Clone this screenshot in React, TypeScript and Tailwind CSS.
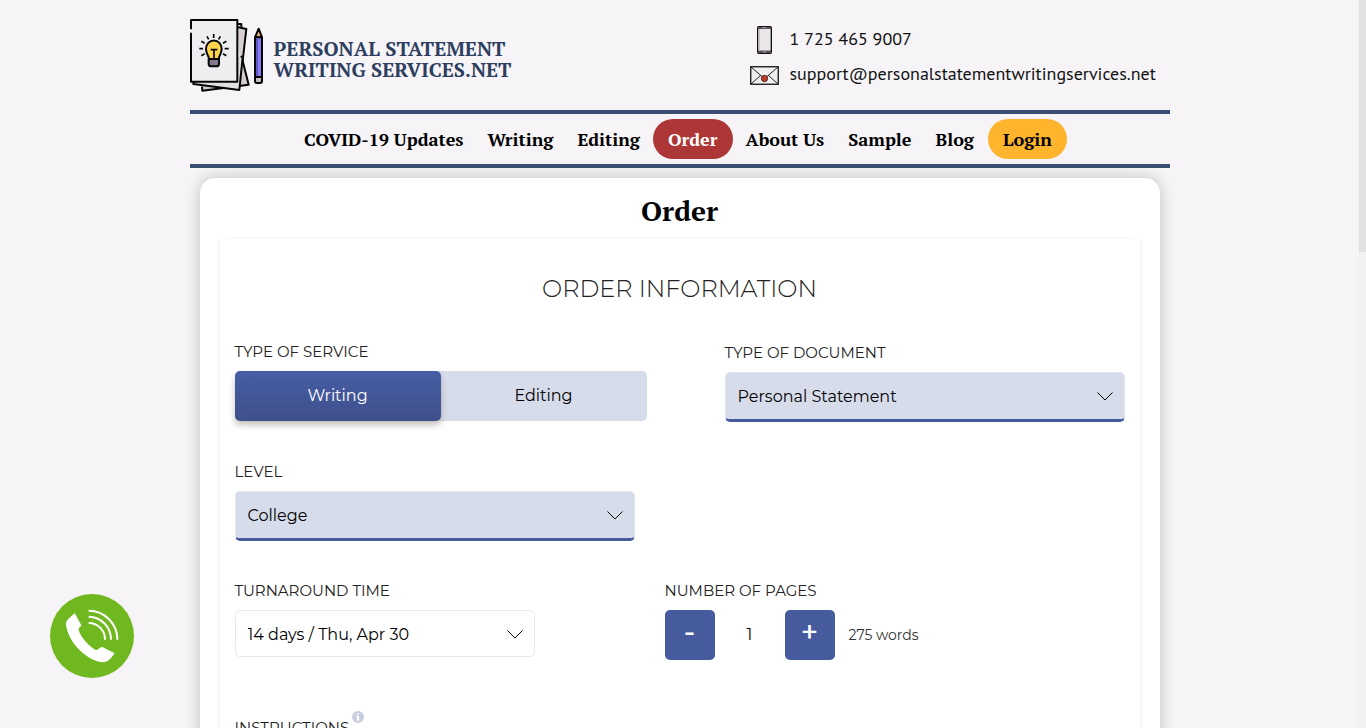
import { useState, type ReactNode } from "react";

const serif = "font-['PT_Serif','Liberation_Serif',serif]";
const body = "font-['Montserrat','Inter',sans-serif]";

function LogoMark() {
  return (
    <svg viewBox="30 24 222 225" className="h-[75px] w-[74px] shrink-0" fill="none" stroke="#050505" strokeWidth="6" strokeLinejoin="round" aria-hidden="true">
      <path d="M172 51 L199 57 L183 195" fill="#d6d0d4" />
      <path d="M173 42 h11 v11" fill="#d9d5d8" />
      <path d="M184 137 L206 224 L67 242 L66 230" fill="#d3cdd1" />
      <path d="M188 142 L178 240 L40 222 V214" fill="#e3e0e3" />
      <path d="M33 58 V30 H172 V215 H33 V68" fill="#eeedef" />
      <path d="M86 147 h31 v14 q0 8 -8 8 h-15 q-8 0 -8 -8z" fill="#85798d" strokeWidth="6" />
      <path d="M87 147 C86 137 78 131 78 116 A23 24 0 0 1 125 116 C125 131 117 137 116 147 Z" fill="#fdd54b" strokeWidth="6" />
      <path d="M92 119 h20 M102 119 v27" strokeWidth="5" />
      <path d="M101 72 v12 M81 79 l5 9 M121 79 l-5 9 M64 94 l10 6 M139 94 l-10 6 M58 116 h11 M134 116 h12 M64 137 l10 -6 M139 137 l-10 -6" strokeWidth="5" />
      <path d="M225 82 L236 56 L246 82 Z" fill="#f4b877" strokeWidth="6" />
      <path d="M225 82 H246 V201 H225 Z" fill="#8678f0" strokeWidth="6" />
      <path d="M231 85 V198" stroke="#5a4fc4" strokeWidth="5" />
      <path d="M225 201 H246 V213 q0 6 -6 6 h-9 q-6 0 -6 -6z" fill="#c5c0c7" strokeWidth="6" />
    </svg>
  );
}

function MobileIcon() {
  return (
    <svg viewBox="0 0 15 28" className="h-7 w-[15px]" aria-hidden="true">
      <rect x=".5" y=".5" width="14" height="27" rx=".8" fill="#5b4f57" stroke="#111" />
      <rect x="1.5" y="3" width="12" height="21.5" fill="#e9e7ea" />
      <path d="M1.5 3h1.5v21.5H1.5z" fill="#c9c5ca" />
      <path d="M5.5 1.5h4M6 26h3" stroke="#b9b3b9" strokeWidth=".8" />
    </svg>
  );
}

function MailIcon() {
  return (
    <svg viewBox="0 0 29 19" className="h-[19px] w-[29px]" aria-hidden="true">
      <rect x=".75" y=".75" width="27.5" height="17.5" fill="#f1f0f1" stroke="#111" strokeWidth="1.3" />
      <path d="M1 1L12 10.5M28 1L17 10.5M1 18L11 9M28 18L18 9" stroke="#222" fill="none" />
      <circle cx="14.5" cy="12.5" r="3.1" fill="#d8432b" stroke="#2b0d08" strokeWidth=".9" />
      <path d="M13.5 11.5l2 2M15.5 11.5l-2 2" stroke="#5b150c" strokeWidth=".7" />
    </svg>
  );
}

function CallIcon() {
  return (
    <svg viewBox="30 30 252 252" className="size-[84px]" aria-hidden="true">
      <circle cx="156" cy="156" r="126" fill="#70b820" />
      <path d="M104 87 L124 124 C125 128 115 130 116 137 C120 158 150 190 168 198 C176 199 178 188 187 189 L224 208 C215 221 206 232 195 234 C184 236 169 231 160 227 C119 207 84 166 78 122 C76 109 93 98 104 87Z" fill="#fff" />
      <g fill="none" stroke="#fff" strokeWidth="6">
        <path d="M146 80 A86 86 0 0 1 232 167" />
        <path d="M146 98 A68 68 0 0 1 213 167" />
        <path d="M146 117 A49 49 0 0 1 195 167" />
      </g>
    </svg>
  );
}

function NavLink({ children }: { children: ReactNode }) {
  return (
    <a href="#" className="px-3 leading-10">
      {children}
    </a>
  );
}

function Dropdown({ id, options, filled }: { id: string; options: string[]; filled?: boolean }) {
  return (
    <div className="relative">
      <select
        id={id}
        className={
          filled
            ? "block h-[50px] w-full appearance-none rounded-[5px] border border-b-[3px] border-[#e1e5f0] border-b-[#465a9e] bg-[#d7dceb] px-3 pt-0.5 text-[16px] text-black"
            : "block h-[47px] w-full appearance-none rounded-[5px] border border-[#e9e9e9] bg-white px-3 pt-0.5 text-[16px] text-black"
        }
      >
        {options.map((o) => (
          <option key={o}>{o}</option>
        ))}
      </select>
      <svg viewBox="0 0 16 9" className="pointer-events-none absolute top-5 right-3 h-[9px] w-4" fill="none" stroke="#000" aria-hidden="true">
        <path d="M.5.5L8 8L15.500.5" />
      </svg>
    </div>
  );
}

const labelClass = "mb-[7px] block text-[15px] leading-6 text-[#222]";
const stepClass = "size-[50px] rounded-[5px] bg-[#465a9e] pb-1.5 text-[30px] leading-10 font-medium text-white";

export default function App() {
  const [service, setService] = useState("Writing");
  const [pages, setPages] = useState(1);

  return (
    <div className="flex h-screen overflow-hidden bg-[#f6f4f7]">
      <div className="min-w-0 grow overflow-y-auto [scrollbar-width:none]">
        <div className="mx-auto max-w-[980px]">
          <header className="flex h-[110px] items-start justify-between">
            <a href="#" className="flex gap-[10px] pt-[18px]">
              <LogoMark />
              <span className={`${serif} flex flex-col pt-5 text-[20px] leading-[21px] font-bold text-[#2d3e5e]`}>
                <span>PERSONAL STATEMENT</span>
                <span>WRITING SERVICES.NET</span>
              </span>
            </a>
            <address className="grid w-[420px] grid-cols-[29px_1fr] items-center gap-x-[11px] gap-y-[7px] pt-[26px] font-['PT_Sans','Noto_Sans',sans-serif] text-[18px] leading-7 font-light text-[#111] not-italic">
              <span className="flex justify-center">
                <MobileIcon />
              </span>
              <a href="tel:17254659007" className="pb-0.5 leading-[26px]">1 725 465 9007</a>
              <MailIcon />
              <a href="mailto:support@personalstatementwritingservices.net" className="pb-0.5 leading-[26px]">
                support@personalstatementwritingservices.net
              </a>
            </address>
          </header>

          <nav className={`${serif} flex h-[58px] items-center justify-center border-y-4 border-[#394e71] text-[18px] font-bold text-black`}>
            <NavLink>COVID-19 Updates</NavLink>
            <NavLink>Writing</NavLink>
            <NavLink>Editing</NavLink>
            <a href="#" className="mx-px rounded-[20px] bg-[#ad3636] px-[15px] leading-10 text-white">
              Order
            </a>
            <NavLink>About Us</NavLink>
            <NavLink>Sample</NavLink>
            <NavLink>Blog</NavLink>
            <a href="#" className="ml-0.5 rounded-[20px] bg-[#ffb42d] px-[15px] leading-10">
              Login
            </a>
          </nav>

          <main className="mx-[10px] mt-[10px] rounded-[15px] bg-white px-5 pb-10 shadow-[0_0_15px_rgba(0,0,0,0.22)]">
            <h1 className={`${serif} pt-[13px] pb-2 text-center text-[28px] leading-10 font-bold text-black`}>Order</h1>

            <form className={`${body} rounded-[5px] px-[15px] pt-[34px] pb-20 shadow-[0_1px_4px_rgba(0,0,0,0.1)]`}>
              <h2 className="text-center text-[24px] leading-8 font-light text-[#222]">ORDER INFORMATION</h2>

              <div className="mt-[35px] flex justify-between">
                <fieldset className="w-[412px]">
                  <legend className={labelClass}>TYPE OF SERVICE</legend>
                  <div className="flex rounded-[5px] bg-[#d7dceb]">
                    {["Writing", "Editing"].map((s) => (
                      <button
                        key={s}
                        type="button"
                        aria-pressed={service === s}
                        onClick={() => setService(s)}
                        className={
                          service === s
                            ? "h-[50px] flex-1 rounded-[5px] bg-linear-to-b from-[#465ea6] to-[#3f4f8a] text-[16px] text-white shadow-[0_4px_6px_rgba(60,50,30,0.3)]"
                            : "h-[50px] flex-1 rounded-[5px] text-[16px] text-black"
                        }
                      >
                        {s}
                      </button>
                    ))}
                  </div>
                </fieldset>
                <div className="w-[400px] pt-px">
                  <label htmlFor="document" className={labelClass}>TYPE OF DOCUMENT</label>
                  <Dropdown id="document" options={["Personal Statement"]} filled />
                </div>
              </div>

              <div className="mt-[38px] w-[400px]">
                <label htmlFor="level" className={labelClass}>LEVEL</label>
                <Dropdown id="level" options={["College"]} filled />
              </div>

              <div className="mt-[38px] flex gap-[130px]">
                <div className="w-[300px]">
                  <label htmlFor="deadline" className={labelClass}>TURNAROUND TIME</label>
                  <Dropdown id="deadline" options={["14 days / Thu, Apr 30"]} />
                </div>
                <div>
                  <label htmlFor="pages" className={labelClass}>NUMBER OF PAGES</label>
                  <div className="flex items-center">
                    <button type="button" aria-label="Fewer pages" onClick={() => setPages(Math.max(1, pages - 1))} className={stepClass}>
                      -
                    </button>
                    <input id="pages" value={pages} readOnly className="w-[70px] text-center text-[16px] text-black" />
                    <button type="button" aria-label="More pages" onClick={() => setPages(pages + 1)} className={stepClass}>
                      +
                    </button>
                    <span className="ml-[14px] text-[14px] text-[#333]">{pages * 275} words</span>
                  </div>
                </div>
              </div>

              <div className="mt-14">
                <label htmlFor="instructions" className={`${labelClass} flex`}>
                  INSTRUCTIONS
                  <svg viewBox="0 0 12 12" className="-mt-[5px] ml-[3px] size-3" aria-hidden="true">
                    <circle cx="6" cy="6" r="6" fill="#c9cedf" />
                    <path d="M5 2.500h2v1.500H5zM4.500 5H7v3.500h.500v1h-3v-1H5V6h-.500z" fill="#fff" />
                  </svg>
                </label>
                <textarea id="instructions" className="h-40 w-full rounded-[5px] border border-[#e9e9e9]" />
              </div>
            </form>
          </main>
        </div>
      </div>

      <div className="w-[7px] shrink-0 bg-[#f1f1f1]" aria-hidden="true">
        <div className="h-[34.6%] bg-[#e1e1e1]" />
      </div>

      <a href="tel:17254659007" aria-label="Call us" className="fixed bottom-[50px] left-[50px]">
        <CallIcon />
      </a>
    </div>
  );
}
